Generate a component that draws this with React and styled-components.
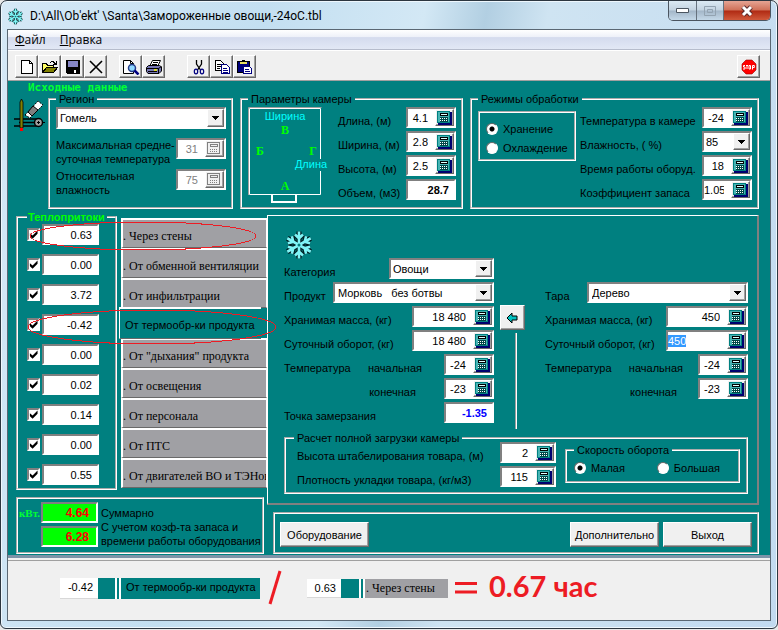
import React from "react";
import styled, { createGlobalStyle, css } from "styled-components";

const TEAL = "#008080";
const FACE = "#f0f0f0";
const RED = "#ed1c24";

const GlobalStyle = createGlobalStyle`
  * {
    box-sizing: border-box;
  }
  body {
    margin: 0;
    background: #e8e8e8;
    font-family: "Liberation Sans", Arial, sans-serif;
    font-size: 11px;
    line-height: 14px;
    color: #000;
  }
  input, select, button {
    font: inherit;
    color: inherit;
    margin: 0;
  }
  svg {
    display: block;
    flex: none;
  }
`;

const raised = css`
  border: 1px solid;
  border-color: #fff #696969 #696969 #fff;
  box-shadow: inset -1px -1px 0 #a0a0a0;
  background: ${FACE};
`;

const sunken = css`
  border: 2px solid;
  border-color: #808080 #fff #fff #808080;
`;

/* ---------- window ---------- */

const Window = styled.div`
  border: 1px solid #2c3640;
  border-radius: 7px 7px 6px 6px;
  padding: 0 6px 7px;
  background: linear-gradient(
    100deg,
    #d5e8f6 0%,
    #c3dff1 30%,
    #d3e8f5 48%,
    #b2cfe2 55%,
    #cfe4f2 62%,
    #c2daf0 100%
  );
  box-shadow: inset 0 0 0 1px #eef7fd;
`;

const TitleBar = styled.header`
  display: flex;
  align-items: flex-start;
  height: 28px;
`;

const Title = styled.h1`
  display: flex;
  align-items: center;
  gap: 6px;
  flex: 1;
  margin: 0;
  padding-top: 6px;
  font: 12px/18px Roboto, "Noto Sans", sans-serif;
  white-space: pre;
`;

const WindowButtons = styled.div`
  display: flex;
  border: 1px solid #4b5560;
  border-top: 0;
  border-radius: 0 0 5px 5px;
  overflow: hidden;
`;

const WindowButton = styled.button`
  display: flex;
  align-items: center;
  justify-content: center;
  width: ${p => (p.$close ? 47 : 27)}px;
  height: 19px;
  padding: 0;
  border: 0;
  border-left: ${p => (p.$first ? 0 : 1)}px solid #66727e;
  background: ${p =>
    p.$close
      ? "linear-gradient(#e5a493 0%, #cf7058 48%, #b02a13 52%, #d0593b 100%)"
      : "linear-gradient(#dbe9f3 0%, #c3d3e0 48%, #a3b6c8 52%, #c4d8e8 100%)"};
`;

const Client = styled.div`
  border: 1px solid #5a6773;
  background: ${FACE};
`;

const MenuBar = styled.nav`
  display: flex;
  gap: 14px;
  height: 20px;
  padding: 0 7px;
  border-bottom: 1px solid #b6bccc;
  background: linear-gradient(#fff 0%, #eef1f9 35%, #d4dbee 40%, #e2e8f5 100%);
`;

const MenuItem = styled.button`
  border: 0;
  padding: 0;
  background: none;
  font: 12px/18px "Open Sans", "Noto Sans", sans-serif;
`;

const Toolbar = styled.div`
  display: flex;
  height: 31px;
  padding: 4px 10px 0 7px;
  border-top: 1px solid #fff;
  border-bottom: 1px solid #a0a0a0;
`;

const ToolGroup = styled.div`
  display: flex;
  margin-right: ${p => p.$after || 0}px;
  margin-left: ${p => (p.$end ? "auto" : 0)};
`;

const ToolButton = styled.button`
  ${raised}
  display: flex;
  align-items: center;
  justify-content: center;
  width: 23px;
  height: 23px;
  padding: 0;
`;

/* ---------- form parts ---------- */

const Body = styled.main`
  padding: 0 11px 1px 5px;
  background: ${TEAL};
`;

const SectionTitle = styled.h2`
  margin: 0 0 -2px 15px;
  font: bold 11px/13px "DejaVu Sans Mono", monospace;
  color: #0f3;
`;

const TopRow = styled.div`
  display: grid;
  grid-template-columns: 28px 185fr 223fr 289fr;
  column-gap: 7px;
`;

const DraftIcon = styled.svg`
  margin-top: 7px;
`;

const Group = styled.fieldset`
  min-width: 0;
  margin: 0;
  padding: ${p => p.$pad || "1px 5px 3px 6px"};
  border: 2px groove #fff;
`;

const Legend = styled.legend`
  padding: 0 3px;
  line-height: 14px;
  ${p => p.$green && "color: #0f0; font-weight: bold;"}
`;

const Columns = styled.div`
  display: flex;
  align-items: flex-start;
  gap: ${p => p.$gap || 0}px;
`;

const Rows = styled.div`
  display: flex;
  flex-direction: column;
  flex: ${p => (p.$grow ? 1 : "none")};
  gap: ${p => p.$gap || 3}px;
  min-width: 0;
`;

const Row = styled.div`
  display: flex;
  align-items: ${p => p.$align || "flex-end"};
  justify-content: space-between;
  padding-top: ${p => p.$top || 0}px;
`;

const Label = styled.label`
  white-space: pre-line;
  ${p => p.$nowrap && "white-space: nowrap;"}
`;

const Field = styled.span`
  ${sunken}
  display: flex;
  flex: none;
  width: ${p => p.$width || 50}px;
  height: 21px;
  background: #fff;
`;

const Input = styled.input`
  flex: 1;
  min-width: 0;
  height: 17px;
  padding: 0 ${p => (p.$bare ? 5 : 7)}px 0 0;
  border: 0;
  outline: 0;
  background: #fff;
  text-align: ${p => (p.$left ? "left" : "right")};
  font-weight: ${p => (p.$bold ? "bold" : "normal")};
  color: ${p => p.$color || "#000"};
  &:disabled {
    color: #808080;
  }
  &::selection {
    background: #3399ff;
    color: #fff;
  }
`;

const TotalInput = styled(Input)`
  padding-right: 7px;
  background: #0f0;
  color: #f00;
  font-size: 12px;
  font-weight: bold;
`;

const CalcButton = styled.button`
  ${raised}
  display: flex;
  align-items: center;
  justify-content: center;
  width: 19px;
  height: 17px;
  padding: 0;
`;

const SelectBox = styled.span`
  ${sunken}
  display: grid;
  grid-template-columns: 1fr 17px;
  flex: none;
  width: ${p => (p.$width ? p.$width + "px" : "100%")};
  height: ${p => p.$height || 21}px;
  background: #fff;
`;

const Select = styled.select`
  grid-area: 1 / 1 / 2 / 3;
  min-width: 0;
  padding: 0 0 0 ${p => p.$inset || 2}px;
  border: 0;
  outline: 0;
  appearance: none;
  background: none;
`;

const SelectArrow = styled.span`
  ${raised}
  grid-area: 1 / 2;
  display: flex;
  align-items: center;
  justify-content: center;
  pointer-events: none;
`;

const Check = styled.input`
  ${sunken}
  appearance: none;
  display: block;
  width: 13px;
  height: 13px;
  background: #fff;
  &:checked::after {
    content: "";
    display: block;
    width: 9px;
    height: 9px;
    background: #000;
    clip-path: polygon(10% 35%, 40% 62%, 95% 5%, 95% 42%, 40% 98%, 10% 70%);
  }
`;

const Radio = styled.input`
  appearance: none;
  width: 12px;
  height: 12px;
  border: 1px solid;
  border-color: #696969 #fff #fff #696969;
  border-radius: 50%;
  background: #fff;
  &:checked {
    background: radial-gradient(circle, #000 0 2px, #fff 3px);
  }
`;

const RadioLabel = styled.label`
  display: flex;
  align-items: center;
  gap: 5px;
`;

const RadioPanel = styled.div`
  display: flex;
  flex-direction: column;
  gap: 5px;
  width: 98px;
  margin-top: 4px;
  padding: 9px 6px 4px;
  border: 2px groove #fff;
`;

const PushButton = styled.button`
  ${raised}
  width: 89px;
  height: 25px;
  padding: 0;
`;

/* ---------- heat gains ---------- */

const Main = styled.div`
  display: grid;
  grid-template-columns: 251px 1fr;
  margin-left: 3px;
  padding-top: 1px;
`;

const Left = styled.div`
  position: relative;
`;

const GainsRow = styled.div`
  display: flex;
`;

const GainsGroup = styled(Group)`
  width: 101px;
  padding: 0 16px 3px 9px;
`;

const GainsLegend = styled(Legend)`
  white-space: nowrap;
  margin-right: -10px;
  padding: 0 2px 0 1px;
`;

const GainLine = styled.div`
  display: flex;
  align-items: center;
  justify-content: space-between;
`;

const Tabs = styled.div`
  flex: 1;
  min-width: 0;
  margin: 8px 0 0 4px;
`;

const Tab = styled.button`
  display: block;
  width: 100%;
  height: 30px;
  padding: 4px 0 0;
  border: 1px solid;
  border-width: 2px 1px 1px 2px;
  border-color: #fff #fff #696969 #fff;
  background: #a0a0a4;
  font: 12px/20px "Liberation Serif", "Times New Roman", serif;
  text-align: left;
  white-space: nowrap;
  overflow: hidden;
  ${p =>
    p.$active &&
    css`
      position: relative;
      width: auto;
      height: 32px;
      margin: -1px -2px -1px -2px;
      padding: 2px 6px 0 5px;
      border-width: 2px 0 1px 1px;
      background: ${TEAL};
      font: 11px/20px "Liberation Sans", Arial, sans-serif;
    `}
`;

const Marks = styled.svg`
  position: absolute;
  left: 10px;
  top: 10px;
  pointer-events: none;
`;

const Summary = styled.div`
  display: grid;
  grid-template-columns: 21px 57px 1fr;
  column-gap: 1px;
  margin: 7px 3px 0 0;
  padding: 3px 0 4px 1px;
  border: 2px groove #fff;
`;

const Unit = styled.span`
  padding-top: 4px;
  font: bold 11px/14px "Liberation Serif", serif;
  color: #0f3;
`;

const SummaryText = styled.div`
  padding: 4px 0 0 2px;
  line-height: 14px;
  white-space: nowrap;
`;

const Right = styled.div`
  display: flex;
  flex-direction: column;
  padding-top: 5px;
`;

const Panel = styled.section`
  flex: 1;
  padding: 14px 9px 9px 16px;
  border: 2px solid;
  border-color: #fff #808080 #808080 #fff;
  border-width: 1px 2px 2px 1px;
`;

const PanelGrid = styled.div`
  display: grid;
  grid-template-columns: 211fr 51px 204fr;
  align-items: start;
`;

const Snow = styled.div`
  margin-bottom: -5px;
`;

const PanelRight = styled(Rows)`
  margin-top: 52px;
`;

const Transfer = styled.div`
  display: flex;
  flex-direction: column;
  align-items: center;
  gap: 3px;
  margin: 75px 20px 0 6px;
`;

const TransferButton = styled.button`
  ${raised}
  display: flex;
  align-items: center;
  justify-content: center;
  width: 25px;
  height: 25px;
  padding: 0;
`;

const Divider = styled.div`
  width: 2px;
  height: 96px;
  margin-left: 8px;
  border-left: 1px solid #a0a0a0;
  border-right: 1px solid #fff;
`;

const TempLabel = styled.label`
  display: flex;
  justify-content: space-between;
  width: 138px;
`;

const LoadGroup = styled(Group)`
  margin-top: 2px;
`;

const LoadColumns = styled.div`
  display: flex;
  align-items: flex-start;
  justify-content: space-between;
  margin-top: -3px;
`;

const LoadRows = styled(Rows)`
  width: 262px;
  padding-left: 3px;
`;

const SpeedGroup = styled(Group)`
  width: 175px;
  margin-top: 1px;
  padding: 4px 18px 6px 7px;
`;

const SpeedOptions = styled.div`
  display: flex;
  justify-content: space-between;
`;

const Actions = styled.div`
  display: flex;
  gap: 4px;
  margin: 7px 0 0 6px;
  padding: 8px 5px 5px;
  border: 2px groove #fff;
`;

const Spacer = styled.div`
  flex: 1;
`;

/* ---------- result strip ---------- */

const Result = styled.footer`
  display: flex;
  align-items: flex-start;
  height: 65px;
  padding: 11px 0 0 52px;
  border-top: 3px solid #7d93a8;
  box-shadow: inset 0 2px 0 ${FACE}, inset 0 3px 0 #a0a0a0;
`;

const Piece = styled.div`
  display: flex;
  height: ${p => p.$height}px;
  margin-top: ${p => p.$top}px;
  line-height: 19px;
  background: ${TEAL};
`;

const PieceValue = styled.span`
  width: ${p => p.$width}px;
  padding-right: 5px;
  border-bottom: 1px solid #d8d8d8;
  background: #fff;
  text-align: right;
`;

const PieceGap = styled.span`
  width: ${p => p.$width}px;
  margin-right: 2px;
  border-right: 2px solid #fff;
`;

const PieceName = styled.span`
  width: ${p => p.$width}px;
  padding-left: 5px;
  border-left: 2px solid #fff;
  white-space: nowrap;
  ${p =>
    p.$grey &&
    css`
      padding-left: 1px;
      background: #a0a0a4;
      font: 12px/18px "Liberation Serif", "Times New Roman", serif;
    `}
`;

const Slash = styled.svg`
  margin: 0 25px 0 7px;
`;

const Equals = styled.svg`
  margin: 13px 12px 0 7px;
`;

const Answer = styled.strong`
  font: bold 29px/34px Lato, "Open Sans", sans-serif;
  color: ${RED};
`;

/* ---------- icons ---------- */

const SnowIcon = ({ size }) => (
  <svg width={size} height={size} viewBox="0 0 30 30" fill="none">
    {[
      ["#001c20", 5],
      ["#7ff4f6", 2.6]
    ].map(([stroke, width]) => (
      <g key={stroke} stroke={stroke} strokeWidth={width}>
        {[0, 60, 120, 180, 240, 300].map(a => (
          <path
            key={a}
            transform={`rotate(${a} 15 15)`}
            d="M15 15V1.500M11 4.500l4 4 4-4"
          />
        ))}
      </g>
    ))}
    <circle cx="15" cy="15" r="1.500" fill="#008080" />
  </svg>
);

const CalcIcon = ({ off }) => {
  const dark = off ? "#808080" : "#000";
  return (
    <svg width="15" height="14" shapeRendering="crispEdges">
      {!off && <path d="M1 1h14v13H1z" fill="#000070" />}
      <path d="M0 0h13v12H0z" fill={off ? dark : TEAL} />
      <path d="M1 1h11v10H1z" fill={off ? "#f0f0f0" : "#48b4b4"} />
      <path d="M3 2h8v3H3z" fill={dark} />
      <path d="M4 3h6v1H4z" fill={off ? "#f0f0f0" : "#dff"} />
      {!off && <path d="M3 6h8v5H3z" fill="#004848" />}
      <path
        d="M3 7h8M3 9h8"
        transform="translate(0 .5)"
        stroke={off ? "#808080" : "#fff"}
        strokeDasharray="1 1"
      />
    </svg>
  );
};

const ArrowDown = () => (
  <svg width="7" height="4" shapeRendering="crispEdges">
    <path d="M0 0h7v1H6v1H5v1H4v1H3V3H2V2H1V1H0z" />
  </svg>
);

const NewIcon = () => (
  <svg width="16" height="16" shapeRendering="crispEdges">
    <path d="M2.5 1.5h8l3 3v10h-11z" fill="#fff" stroke="#000" />
    <path d="M10.5 1.5v3h3" fill="none" stroke="#000" />
  </svg>
);

const OpenIcon = () => (
  <svg width="18" height="16" viewBox="0 0 18 16" shapeRendering="crispEdges">
    <path d="M1.500 13.500v-9h4l1 2h6v3" fill="#ffff66" stroke="#000" />
    <path d="M1.500 13.500l4-5h11l-4 5z" fill="#808000" stroke="#000" />
    <path d="M9 3h1V2h3v1h1v1h1V2h1v4h-4V5h1V4h-1V3h-2v1H9z" />
  </svg>
);

const SaveIcon = () => (
  <svg width="16" height="16" shapeRendering="crispEdges">
    <path d="M1 1h14v14H2l-1-1z" />
    <path d="M3 2h10v6H3z" fill="#8484c4" />
    <path d="M9 11h2v3H9z" fill="#fff" />
  </svg>
);

const DeleteIcon = () => (
  <svg width="16" height="16">
    <path d="M2 2l12 12M14 2L2 14" stroke="#000" strokeWidth="1.600" />
  </svg>
);

const PreviewIcon = () => (
  <svg width="18" height="16">
    <path d="M1.500 1.500h7l3 3v10h-10z" fill="#fff" stroke="#000" />
    <path d="M8.500 1.500v3h3" fill="none" stroke="#000" />
    <circle cx="10" cy="9" r="3.500" fill="#8fd8ff" stroke="#223a88" strokeWidth="1.500" />
    <path d="M12.500 11.500l4 4" stroke="#000080" strokeWidth="2.500" />
  </svg>
);

const PrintIcon = () => (
  <svg width="18" height="16">
    <path d="M4.500 7.500l3-6h8l-3 6z" fill="#fff" stroke="#000" />
    <path d="M8 3.500h5M7 5.500h5" stroke="#000" />
    <path d="M1.500 8.500l2-2h11l2 1.500v4l-2.500 2.500h-11l-1.500-2z" fill="#7676b4" stroke="#000" />
    <path d="M1.500 9.500h12l3-2M13.500 9.500v5M3 12.500h9" fill="none" stroke="#000" />
    <path d="M9 11h3" stroke="#ff0" strokeWidth="1.500" />
  </svg>
);

const CutIcon = () => (
  <svg width="16" height="16" fill="none">
    <path d="M5.500 1v4l4 6M10.500 1v4l-4 6" stroke="#000" strokeWidth="1.300" />
    <ellipse cx="5" cy="12.500" rx="1.700" ry="2.300" stroke="#000080" strokeWidth="1.200" />
    <ellipse cx="11" cy="12.500" rx="1.700" ry="2.300" stroke="#000080" strokeWidth="1.200" />
  </svg>
);

const CopyIcon = () => (
  <svg width="16" height="16" shapeRendering="crispEdges">
    <path d="M1.500 1.500h5l3 3v7h-8z" fill="#fff" stroke="#000" />
    <path d="M3 5h4M3 7h4M3 9h3" stroke="#000" />
    <path d="M7.500 5.500h5l3 3v6h-8z" fill="#fff" stroke="#000080" />
    <path d="M9 9h4M9 11h5M9 13h5" stroke="#000080" />
  </svg>
);

const PasteIcon = () => (
  <svg width="17" height="16" shapeRendering="crispEdges">
    <path d="M1.500 2.500h12v11h-12z" fill="#00007c" stroke="#000" />
    <path d="M4 3h7v2H4z" fill="#e8e060" />
    <path d="M6 1h3v2H6z" />
    <path d="M7.500 7.500h6l2 2v5h-8z" fill="#fff" stroke="#000080" />
    <path d="M9 10h4M9 12h5" stroke="#000080" />
  </svg>
);

const StopIcon = () => (
  <svg width="16" height="16">
    <path d="M5 1h6l4 4v6l-4 4H5l-4-4V5z" fill="#f00" stroke="#900" strokeWidth=".600" />
    <path
      d="M4 6.500H2.500v1.500H4v2H2M5 6.500h2M6 6.500V10M8 6.500h1.500V10H8zM11.500 10.500v-4h1.800v2h-1.800"
      fill="none"
      stroke="#fff"
    />
  </svg>
);

const BackIcon = () => (
  <svg width="12" height="12">
    <path d="M1 6l5-5v3h5v4H6v3z" fill="#00c0c0" stroke="#000" />
  </svg>
);

const Drafting = () => (
  <DraftIcon width="32" height="33" viewBox="0 0 32 33">
    <path d="M12 16L25 2l5 4-13 13z" fill="#fff" stroke="#000" strokeDasharray="2 1" />
    <path d="M15 13l5-6 5 4-6 6z" fill="#808080" stroke="#000" />
    <path d="M1 20h24M1 27h24M6 23.500h16" fill="none" stroke="#000" strokeWidth="1.300" />
    <circle cx="25.500" cy="23.500" r="4" fill="#a0a0a0" stroke="#000" strokeWidth="1.500" />
    <path d="M24 23.500h3M25.500 22v3M29 23.500h3" stroke="#000" />
    <path d="M7 29V3l1.500-3L10 3v26z" fill="#808000" stroke="#000" strokeWidth=".800" />
    <path d="M7 29h3v3H7z" fill="#f00" />
  </DraftIcon>
);

const RoomPlan = () => (
  <svg width="80" height="97" fontFamily="Liberation Sans" fontSize="11" textAnchor="middle">
    <path d="M1.500 1.500h71v86h-71z" fill="none" stroke="#fff" />
    <path d="M.5 88V.5h73" fill="none" stroke="#a0a0a0" />
    <path d="M24 88v7h24v-7" fill="none" stroke="#fff" strokeWidth="2" />
    <path d="M46 52h34v12H46z" fill={TEAL} />
    <g fill="#0ff">
      <text x="37" y="13">Ширина</text>
      <text x="63" y="61">Длина</text>
    </g>
    <g fill="#0f0" fontFamily="Liberation Serif" fontSize="12" fontWeight="bold">
      <text x="37" y="27">В</text>
      <text x="12" y="48">Б</text>
      <text x="65" y="48">Г</text>
      <text x="37" y="83">А</text>
    </g>
  </svg>
);

/* ---------- composite controls ---------- */

const NumberField = ({ id, value, width, disabled, label, ...rest }) => (
  <Field $width={width}>
    <Input id={id} aria-label={label} defaultValue={value} disabled={disabled} {...rest} />
    <CalcButton type="button" aria-label="Калькулятор" disabled={disabled}>
      <CalcIcon off={disabled} />
    </CalcButton>
  </Field>
);

const Combo = ({ id, value, width, height, inset, label }) => (
  <SelectBox $width={width} $height={height}>
    <Select id={id} aria-label={label} $inset={inset}>
      <option>{value}</option>
    </Select>
    <SelectArrow>
      <ArrowDown />
    </SelectArrow>
  </SelectBox>
);

const Line = ({ id, label, children }) => (
  <Row>
    <Label htmlFor={id} $nowrap>
      {label}
    </Label>
    {children}
  </Row>
);

const Temperatures = ({ side }) => (
  <>
    <Row>
      <TempLabel htmlFor={side + "-start"}>
        <span>Температура</span>
        <span>начальная</span>
      </TempLabel>
      <NumberField id={side + "-start"} value="-24" />
    </Row>
    <Row>
      <TempLabel htmlFor={side + "-end"}>
        <span />
        <span>конечная&nbsp;&nbsp;</span>
      </TempLabel>
      <NumberField id={side + "-end"} value="-23" />
    </Row>
  </>
);

const gains = [
  { value: "0.63", name: "Через стены" },
  { value: "0.00", name: "От обменной вентиляции" },
  { value: "3.72", name: "От инфильтрации" },
  { value: "-0.42", name: "От термообр-ки продукта", active: true },
  { value: "0.00", name: 'От "дыхания" продукта' },
  { value: "0.02", name: "От освещения" },
  { value: "0.14", name: "От персонала" },
  { value: "0.00", name: "От ПТС" },
  { value: "0.55", name: "От двигателей ВО и ТЭНов" }
];

const App = () => (
  <>
    <GlobalStyle />
    <Window>
      <TitleBar>
        <Title>
          <SnowIcon size={17} />
          {"D:\\All\\Ob'ekt' \\Santa\\Замороженные овощи,-24oC.tbl"}
        </Title>
        <WindowButtons>
          <WindowButton $first aria-label="Свернуть">
            <svg width="13" height="5">
              <path d="M.5.5h12v4H.5z" fill="#fff" stroke="#4b5560" />
            </svg>
          </WindowButton>
          <WindowButton aria-label="Развернуть" disabled>
            <svg width="12" height="10" fill="none" stroke="#93a3b1">
              <path d="M.5.5h11v9H.5zM3.500 3.500h5v3h-5z" />
            </svg>
          </WindowButton>
          <WindowButton $close aria-label="Закрыть">
            <svg width="14" height="12" viewBox="0 0 14 12">
              <path d="M3 2l8 8M11 2l-8 8" stroke="#5a2a2a" strokeWidth="5" />
              <path d="M3 2l8 8M11 2l-8 8" stroke="#fff" strokeWidth="3" />
            </svg>
          </WindowButton>
        </WindowButtons>
      </TitleBar>

      <Client>
        <MenuBar>
          <MenuItem>
            <u>Ф</u>айл
          </MenuItem>
          <MenuItem>
            <u>П</u>равка
          </MenuItem>
        </MenuBar>
        <Toolbar>
          <ToolGroup $after={12}>
            <ToolButton aria-label="Новый"><NewIcon /></ToolButton>
            <ToolButton aria-label="Открыть"><OpenIcon /></ToolButton>
            <ToolButton aria-label="Сохранить"><SaveIcon /></ToolButton>
            <ToolButton aria-label="Удалить"><DeleteIcon /></ToolButton>
          </ToolGroup>
          <ToolGroup $after={22}>
            <ToolButton aria-label="Просмотр"><PreviewIcon /></ToolButton>
            <ToolButton aria-label="Печать"><PrintIcon /></ToolButton>
          </ToolGroup>
          <ToolGroup>
            <ToolButton aria-label="Вырезать"><CutIcon /></ToolButton>
            <ToolButton aria-label="Копировать"><CopyIcon /></ToolButton>
            <ToolButton aria-label="Вставить"><PasteIcon /></ToolButton>
          </ToolGroup>
          <ToolGroup $end>
            <ToolButton aria-label="Стоп"><StopIcon /></ToolButton>
          </ToolGroup>
        </Toolbar>

        <Body>
          <SectionTitle>Исходные данные</SectionTitle>
          <TopRow>
            <Drafting />
            <Group>
              <Legend>Регион</Legend>
              <Combo value="Гомель" label="Регион" height={22} />
              <Row $align="flex-start" $top={9}>
                <Label htmlFor="temp">{"Максимальная средне-\nсуточная температура"}</Label>
                <NumberField id="temp" value="31" disabled />
              </Row>
              <Row $align="flex-start" $top={3}>
                <Label htmlFor="hum">{"Относительная\nвлажность"}</Label>
                <NumberField id="hum" value="75" disabled />
              </Row>
            </Group>

            <Group>
              <Legend>Параметры камеры</Legend>
              <Columns $gap={10}>
                <RoomPlan />
                <Rows $grow>
                  <Line id="len" label="Длина, (м)">
                    <NumberField id="len" value="4.1" />
                  </Line>
                  <Line id="wid" label="Ширина, (м)">
                    <NumberField id="wid" value="2.8" />
                  </Line>
                  <Line id="hei" label="Высота, (м)">
                    <NumberField id="hei" value="2.5" />
                  </Line>
                  <Line id="vol" label="Объем, (м3)">
                    <Field>
                      <Input id="vol" defaultValue="28.7" $bold $bare />
                    </Field>
                  </Line>
                </Rows>
              </Columns>
            </Group>

            <Group>
              <Legend>Режимы обработки</Legend>
              <Columns $gap={4}>
                <RadioPanel>
                  <RadioLabel>
                    <Radio type="radio" name="mode" defaultChecked />
                    Хранение
                  </RadioLabel>
                  <RadioLabel>
                    <Radio type="radio" name="mode" />
                    Охлаждение
                  </RadioLabel>
                </RadioPanel>
                <Rows $grow>
                  <Line id="room" label="Температура в камере">
                    <NumberField id="room" value="-24" />
                  </Line>
                  <Line id="rh" label="Влажность, ( %)">
                    <Combo id="rh" value="85" width={50} />
                  </Line>
                  <Line id="work" label="Время работы оборуд.">
                    <NumberField id="work" value="18" />
                  </Line>
                  <Line id="coef" label="Коэффициент запаса">
                    <NumberField id="coef" value="1.05" />
                  </Line>
                </Rows>
              </Columns>
            </Group>
          </TopRow>

          <Main>
            <Left>
              <GainsRow>
                <GainsGroup>
                  <GainsLegend $green>Теплопритоки</GainsLegend>
                  <Rows $gap={9}>
                    {gains.map(g => (
                      <GainLine key={g.name}>
                        <Check type="checkbox" defaultChecked aria-label={g.name} />
                        <Field $width={57}>
                          <Input defaultValue={g.value} aria-label={g.name} $bare />
                        </Field>
                      </GainLine>
                    ))}
                  </Rows>
                </GainsGroup>
                <Tabs role="tablist">
                  {gains.map(g => (
                    <Tab key={g.name} role="tab" aria-selected={!!g.active} $active={g.active}>
                      {g.active ? g.name : ". " + g.name}
                    </Tab>
                  ))}
                </Tabs>
              </GainsRow>
              <Summary>
                <Unit>кВт.</Unit>
                <Rows>
                  <Field $width={57}>
                    <TotalInput defaultValue="4.64" aria-label="Суммарно" />
                  </Field>
                  <Field $width={57}>
                    <TotalInput defaultValue="6.28" aria-label="С учетом запаса" />
                  </Field>
                </Rows>
                <SummaryText>
                  Суммарно
                  <br />
                  С учетом коэф-та запаса и
                  <br />
                  времени работы оборудования
                </SummaryText>
              </Summary>
              <Marks width="252" height="128" fill="none" stroke={RED} shapeRendering="crispEdges">
                <ellipse cx="117" cy="16" rx="113" ry="14" />
                <ellipse cx="126" cy="107" rx="124" ry="17" />
              </Marks>
            </Left>

            <Right>
              <Panel>
                <PanelGrid>
                  <Rows>
                    <Snow>
                      <SnowIcon size={30} />
                    </Snow>
                    <Line id="cat" label="Категория">
                      <Combo id="cat" value="Овощи" width={105} />
                    </Line>
                    <Line id="prod" label="Продукт">
                      <Combo id="prod" value={"Морковь\u00a0\u00a0 без ботвы"} width={161} inset={3} />
                    </Line>
                    <Line id="mass" label="Хранимая масса, (кг)">
                      <NumberField id="mass" value="18 480" width={82} />
                    </Line>
                    <Line id="turn" label="Суточный оборот, (кг)">
                      <NumberField id="turn" value="18 480" width={82} />
                    </Line>
                    <Temperatures side="product" />
                    <Line id="freeze" label="Точка замерзания">
                      <Field>
                        <Input id="freeze" defaultValue="-1.35" $bold $bare $color="#00f" />
                      </Field>
                    </Line>
                  </Rows>
                  <Transfer>
                    <TransferButton aria-label="Перенести">
                      <BackIcon />
                    </TransferButton>
                    <Divider />
                  </Transfer>
                  <PanelRight>
                    <Line id="tare" label="Тара">
                      <Combo id="tare" value="Дерево" width={161} inset={3} />
                    </Line>
                    <Line id="tmass" label="Хранимая масса, (кг)">
                      <NumberField id="tmass" value="450" width={82} />
                    </Line>
                    <Line id="tturn" label="Суточный оборот, (кг)">
                      <NumberField
                        id="tturn"
                        value="450"
                        width={82}
                        $left
                        autoFocus
                        onFocus={e => e.target.select()}
                      />
                    </Line>
                    <Temperatures side="tare" />
                  </PanelRight>
                </PanelGrid>

                <LoadGroup $pad="0 6px 5px 8px">
                  <Legend>Расчет полной загрузки камеры</Legend>
                  <LoadColumns>
                    <LoadRows>
                      <Line id="stack" label="Высота штабелирования товара, (м)">
                        <NumberField id="stack" value="2" width={56} />
                      </Line>
                      <Line id="dens" label="Плотность укладки товара, (кг/м3)">
                        <NumberField id="dens" value="115" width={56} />
                      </Line>
                    </LoadRows>
                    <SpeedGroup>
                      <Legend>Скорость оборота</Legend>
                      <SpeedOptions>
                        <RadioLabel>
                          <Radio type="radio" name="speed" defaultChecked />
                          Малая
                        </RadioLabel>
                        <RadioLabel>
                          <Radio type="radio" name="speed" />
                          Большая
                        </RadioLabel>
                      </SpeedOptions>
                    </SpeedGroup>
                  </LoadColumns>
                </LoadGroup>
              </Panel>
              <Actions>
                <PushButton>Оборудование</PushButton>
                <Spacer />
                <PushButton>Дополнительно</PushButton>
                <PushButton>Выход</PushButton>
              </Actions>
            </Right>
          </Main>
        </Body>

        <Result>
          <Piece $height={21} $top={9}>
            <PieceValue $width={38}>-0.42</PieceValue>
            <PieceGap $width={19} />
            <PieceName $width={141}>От термообр-ки продукта</PieceName>
          </Piece>
          <Slash width="15" height="37">
            <path d="M13 2L3 35" stroke={RED} strokeWidth="3" />
          </Slash>
          <Piece $height={19} $top={10}>
            <PieceValue $width={34}>0.63</PieceValue>
            <PieceGap $width={20} />
            <PieceName $width={85} $grey>. Через стены</PieceName>
          </Piece>
          <Equals width="22" height="12">
            <path d="M0 1.500h22M0 10h22" stroke={RED} strokeWidth="3" />
          </Equals>
          <Answer>0.67 час</Answer>
        </Result>
      </Client>
    </Window>
  </>
);

export default App;
